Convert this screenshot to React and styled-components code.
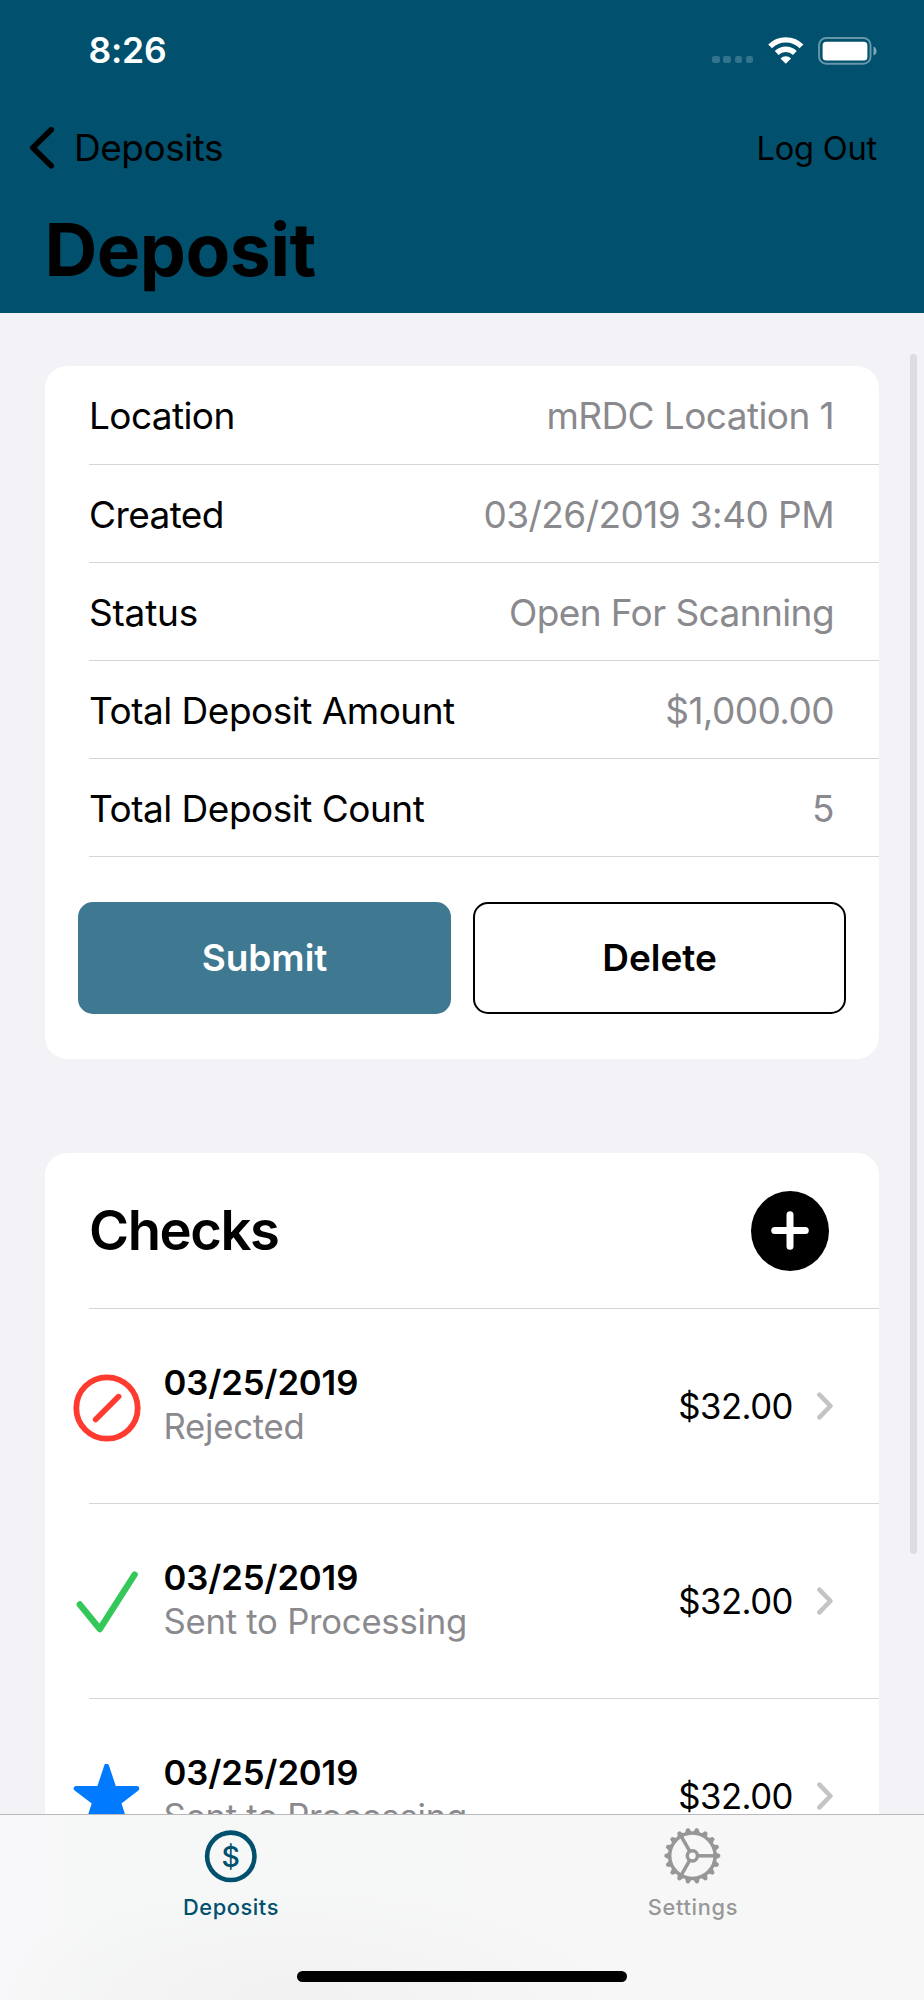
import React from 'react';
import styled, { createGlobalStyle } from 'styled-components';

const GlobalStyle = createGlobalStyle`
    * {
        box-sizing: border-box;
    }
    body {
        margin: 0;
        font-family: Inter, "Liberation Sans", sans-serif;
        color: #000;
    }
`;

const Screen = styled.div`
    position: relative;
    display: flex;
    flex-direction: column;
    width: 924px;
    height: 2000px;
    overflow: hidden;
    background: #f2f2f7;
`;

const Header = styled.header`
    flex: none;
    height: 313px;
    background: #00506e;
`;

const StatusBar = styled.div`
    display: flex;
    align-items: center;
    height: 101px;
    padding: 0 47.5px 0 88.5px;
`;

const Clock = styled.div`
    flex: 1;
    font-size: 35.5px;
    font-weight: 600;
    letter-spacing: -0.25px;
    color: #fff;
`;

const SignalDots = styled.div`
    display: flex;
    gap: 3.7px;
    margin: 18px 14.5px 0 0;
`;

const SignalDot = styled.span`
    width: 7.4px;
    height: 7.4px;
    border-radius: 2.2px;
    background: #33738b;
`;

const NavBar = styled.nav`
    display: flex;
    align-items: center;
    justify-content: space-between;
    height: 93px;
    padding: 0 47px 0 30px;
`;

const BackButton = styled.button`
    display: flex;
    align-items: center;
    gap: 20px;
    padding: 0;
    border: none;
    background: none;
    color: #000;
    font-family: inherit;
    font-size: 37px;
    letter-spacing: -0.48px;
`;

const LogOutButton = styled.button`
    padding: 0;
    border: none;
    background: none;
    color: #000;
    font-family: inherit;
    font-size: 32.6px;
    letter-spacing: -0.2px;
`;

const PageTitle = styled.h1`
    margin: 0;
    padding-left: 44.5px;
    font-size: 73.2px;
    font-weight: 700;
    line-height: 112px;
    letter-spacing: -0.55px;
`;

const Content = styled.main`
    flex: 1;
    min-height: 0;
    padding: 53px 45px 0;
    overflow: hidden;
`;

const Card = styled.section`
    margin-bottom: 94px;
    border-radius: 22px;
    background: #fff;
`;

const DetailList = styled.div`
    padding-top: 1px;
`;

const DetailRow = styled.div`
    display: flex;
    align-items: center;
    justify-content: space-between;
    height: 98px;
    margin-left: 44px;
    padding: 1px 45px 0 0;
    border-bottom: 1px solid #d5d5d7;
    font-size: 37px;

    &:first-child {
        padding-top: 0;
    }
`;

const DetailLabel = styled.div`
    letter-spacing: ${(props) => props.$tracking || '-0.6px'};
`;

const DetailValue = styled.div`
    letter-spacing: -0.58px;
    color: #8a8a8e;
`;

const Actions = styled.div`
    display: flex;
    gap: 22px;
    padding: 45px 33px;
`;

const ActionButton = styled.button`
    flex: 1;
    height: 112px;
    padding: 0 0 2px;
    border: 2px solid ${(props) => (props.$primary ? '#3f7891' : '#000')};
    border-radius: 15px;
    background: ${(props) => (props.$primary ? '#3f7891' : '#fff')};
    color: ${(props) => (props.$primary ? '#fff' : '#000')};
    font-family: inherit;
    font-size: 37px;
    font-weight: 600;
    letter-spacing: -0.05px;
`;

const ChecksHeader = styled.div`
    display: flex;
    align-items: center;
    justify-content: space-between;
    height: 156px;
    margin-left: 44px;
    padding-right: 50px;
    border-bottom: 1px solid #d5d5d7;
`;

const ChecksTitle = styled.h2`
    margin: 0;
    padding-bottom: 2px;
    font-size: 54.4px;
    font-weight: 600;
    letter-spacing: -1.45px;
`;

const AddButton = styled.button`
    display: flex;
    align-items: center;
    justify-content: center;
    width: 78px;
    height: 80px;
    padding: 0;
    border: none;
    border-radius: 50%;
    background: #000;
`;

const CheckRow = styled.div`
    display: flex;
    align-items: center;
    height: 195px;
    margin-left: 44px;
    padding-right: 46px;
    border-bottom: 1px solid #d5d5d7;
`;

const StatusIcon = styled.svg`
    flex: none;
    width: 68px;
    height: 68px;
    margin: 3px 23px 0 -16.5px;
`;

const CheckInfo = styled.div`
    flex: 1;
    padding-bottom: 5px;
    font-size: 34.7px;
    line-height: 44px;
`;

const CheckDate = styled.div`
    font-weight: 600;
    letter-spacing: -0.13px;
`;

const CheckStatus = styled.div`
    letter-spacing: -0.25px;
    color: #8a8a8e;
`;

const CheckAmount = styled.div`
    margin-right: 24px;
    font-size: 34.7px;
    letter-spacing: -0.5px;
`;

const ScrollIndicator = styled.div`
    position: absolute;
    top: 354px;
    right: 7px;
    width: 7px;
    height: 1200px;
    border-radius: 4px;
    background: #dcdce1;
`;

const TabBar = styled.footer`
    display: flex;
    flex-direction: column;
    align-items: center;
    flex: none;
    height: 186px;
    border-top: 1px solid #b9b9bb;
    background:
        radial-gradient(ellipse 320px 110px at 290px 100%, #f1f1f1, rgba(241, 241, 241, 0)),
        linear-gradient(90deg, #f9f9fb, #f6f7f7 12%, #f7f7f7);
`;

const Tabs = styled.div`
    display: flex;
    width: 100%;
    height: 156px;
`;

const Tab = styled.div`
    display: flex;
    flex: 1;
    flex-direction: column;
    align-items: center;
    padding-top: 12px;
    font-size: 21.8px;
    font-weight: 500;
    line-height: 28px;
    letter-spacing: ${(props) => props.$tracking};
    color: ${(props) => (props.$active ? '#00506e' : '#979798')};
`;

const TabIcon = styled.svg`
    width: 58px;
    height: 58px;
    margin-bottom: 8px;
`;

const HomeIndicator = styled.div`
    width: 330px;
    height: 11px;
    border-radius: 6px;
    background: #000;
`;

const details = [
    { label: 'Location', value: 'mRDC Location 1' },
    { label: 'Created', value: '03/26/2019 3:40 PM' },
    { label: 'Status', value: 'Open For Scanning', tracking: '-0.22px' },
    { label: 'Total Deposit Amount', value: '$1,000.00', tracking: '-0.5px' },
    { label: 'Total Deposit Count', value: '5', tracking: '-0.5px' },
];

const checks = [
    { id: 1, icon: 'rejected', date: '03/25/2019', status: 'Rejected', amount: '$32.00' },
    { id: 2, icon: 'sent', date: '03/25/2019', status: 'Sent to Processing', amount: '$32.00' },
    { id: 3, icon: 'starred', date: '03/25/2019', status: 'Sent to Processing', amount: '$32.00' },
];

const gearTeeth = Array.from({ length: 18 }, (_, i) => i * 20);

function WifiIcon() {
    return (
        <svg width="36" height="27" viewBox="0 0 36 27" fill="none" stroke="#fff" strokeWidth="5.4">
            <path d="M2.1 9.4A22.2 22.2 0 0 1 33.5 9.4" />
            <path d="M8.7 16A12.9 12.9 0 0 1 26.9 16" />
            <path d="M17.8 26.8L12.5 21.4A7.6 7.6 0 0 1 23.1 21.4Z" fill="#fff" stroke="none" />
        </svg>
    );
}

const BatterySvg = styled.svg`
    margin-left: 14px;
`;

function BatteryIcon() {
    return (
        <BatterySvg width="59" height="28" viewBox="0 0 59 28">
            <rect x="1.1" y="1.1" width="51.4" height="25.6" rx="7" fill="none" stroke="#6697a9" strokeWidth="2" />
            <rect x="4.6" y="4.8" width="44.8" height="18.8" rx="3.6" fill="#fff" />
            <path d="M55.5 9.4C59.6 11 59.6 17 55.5 18.6Z" fill="#7fa7b6" />
        </BatterySvg>
    );
}

function CheckIcon({ type }) {
    if (type === 'rejected') {
        return (
            <StatusIcon viewBox="0 0 68 68" fill="none" stroke="#ff3b30" strokeLinecap="round">
                <circle cx="34" cy="34" r="30.7" strokeWidth="5.8" />
                <path d="M22.6 45.6L45.6 22.6" strokeWidth="5.6" />
            </StatusIcon>
        );
    }
    if (type === 'sent') {
        return (
            <StatusIcon
                viewBox="0 0 68 68"
                fill="none"
                stroke="#34c759"
                strokeWidth="6.4"
                strokeLinecap="round"
                strokeLinejoin="round"
            >
                <path d="M6.8 35.4L26.8 60L61.6 5.6" />
            </StatusIcon>
        );
    }
    return (
        <StatusIcon viewBox="0 0 68 68" fill="#007aff" stroke="#007aff" strokeWidth="5" strokeLinejoin="round">
            <path d="M33.6 2.2L40.9 24.4L63.8 24.4L45.6 38.4L52.4 60L33.6 48L14.8 60L21.6 38.4L3.2 24.4L26.3 24.4Z" />
        </StatusIcon>
    );
}

function App() {
    return (
        <Screen>
            <GlobalStyle />
            <Header>
                <StatusBar>
                    <Clock>8:26</Clock>
                    <SignalDots>
                        <SignalDot />
                        <SignalDot />
                        <SignalDot />
                        <SignalDot />
                    </SignalDots>
                    <WifiIcon />
                    <BatteryIcon />
                </StatusBar>
                <NavBar>
                    <BackButton>
                        <svg
                            width="24"
                            height="42"
                            viewBox="0 0 24 42"
                            fill="none"
                            stroke="#000"
                            strokeWidth="5.6"
                            strokeLinecap="round"
                            strokeLinejoin="round"
                        >
                            <path d="M21.2 2.8L2.8 20.8L21.2 38.8" />
                        </svg>
                        Deposits
                    </BackButton>
                    <LogOutButton>Log Out</LogOutButton>
                </NavBar>
                <PageTitle>Deposit</PageTitle>
            </Header>

            <Content>
                <Card>
                    <DetailList>
                        {details.map((item) => (
                            <DetailRow key={item.label}>
                                <DetailLabel $tracking={item.tracking}>{item.label}</DetailLabel>
                                <DetailValue>{item.value}</DetailValue>
                            </DetailRow>
                        ))}
                    </DetailList>
                    <Actions>
                        <ActionButton $primary>Submit</ActionButton>
                        <ActionButton>Delete</ActionButton>
                    </Actions>
                </Card>

                <Card>
                    <ChecksHeader>
                        <ChecksTitle>Checks</ChecksTitle>
                        <AddButton aria-label="Add check">
                            <svg
                                width="38"
                                height="39"
                                viewBox="0 0 38 39"
                                stroke="#fff"
                                strokeWidth="7"
                                strokeLinecap="round"
                            >
                                <path d="M19 3.7V35.3M3.7 19.5H34.3" />
                            </svg>
                        </AddButton>
                    </ChecksHeader>
                    {checks.map((check) => (
                        <CheckRow key={check.id}>
                            <CheckIcon type={check.icon} />
                            <CheckInfo>
                                <CheckDate>{check.date}</CheckDate>
                                <CheckStatus>{check.status}</CheckStatus>
                            </CheckInfo>
                            <CheckAmount>{check.amount}</CheckAmount>
                            <svg
                                width="16"
                                height="28"
                                viewBox="0 0 16 28"
                                fill="none"
                                stroke="#c4c4c6"
                                strokeWidth="4.6"
                                strokeLinecap="round"
                                strokeLinejoin="round"
                            >
                                <path d="M2.4 2.6L13.4 14L2.4 25.4" />
                            </svg>
                        </CheckRow>
                    ))}
                </Card>
            </Content>
            <ScrollIndicator />

            <TabBar>
                <Tabs>
                    <Tab $active $tracking="0.58px">
                        <TabIcon viewBox="0 0 58 58">
                            <circle cx="28.8" cy="29.3" r="23.7" fill="none" stroke="#00506e" strokeWidth="4.6" />
                            <text
                                x="28.8"
                                y="39.6"
                                textAnchor="middle"
                                fontSize="28.5"
                                fontWeight="500"
                                fill="#00506e"
                                letterSpacing="0"
                            >
                                $
                            </text>
                        </TabIcon>
                        Deposits
                    </Tab>
                    <Tab $tracking="0.7px">
                        <TabIcon viewBox="0 0 58 58" fill="none" stroke="#979798" strokeWidth="3.5">
                            <circle cx="28.4" cy="28.8" r="22.7" />
                            <circle cx="28.4" cy="28.8" r="5.1" />
                            {gearTeeth.map((angle) => (
                                <path
                                    key={angle}
                                    d="M51.4 25.2L56 27.3Q56.9 28.8 56 30.3L51.4 32.4Z"
                                    fill="#979798"
                                    stroke="none"
                                    transform={`rotate(${angle} 28.4 28.8)`}
                                />
                            ))}
                            {[0, 120, 240].map((angle) => (
                                <path key={angle} d="M34.4 28.8H51" transform={`rotate(${angle} 28.4 28.8)`} />
                            ))}
                        </TabIcon>
                        Settings
                    </Tab>
                </Tabs>
                <HomeIndicator />
            </TabBar>
        </Screen>
    );
}

export default App;
